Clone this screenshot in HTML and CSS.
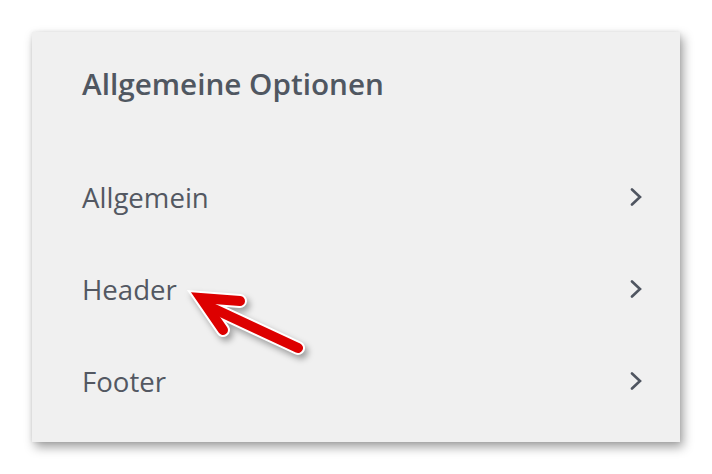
FILE: index.html
```html
<!DOCTYPE html>
<html lang="de">
<head>
<meta charset="utf-8">
<link rel="stylesheet" href="styles.css">
</head>
<body>
<div class="card">
  <h1 class="title">Allgemeine Optionen</h1>
  <ul class="list">
    <li class="row"><span class="label">Allgemein</span><svg class="chev" viewBox="0 0 12 18" width="12" height="18"><path d="M2 1.5 L10 9 L2 16.5" /></svg></li>
    <li class="row"><span class="label">Header</span><svg class="chev" viewBox="0 0 12 18" width="12" height="18"><path d="M2 1.5 L10 9 L2 16.5" /></svg></li>
    <li class="row"><span class="label">Footer</span><svg class="chev" viewBox="0 0 12 18" width="12" height="18"><path d="M2 1.5 L10 9 L2 16.5" /></svg></li>
  </ul>
  <svg class="arrow" viewBox="32 32 648 410" width="648" height="410">
    <g class="outline">
      <path d="M240 301 L201 298 L223 330" />
      <path d="M210 307 L298 348" />
    </g>
    <g class="fill">
      <path d="M240 301 L201 298 L223 330" />
      <path d="M210 307 L298 348" />
    </g>
  </svg>
</div>
</body>
</html>
```

FILE: styles.css
```css
html, body {
  margin: 0;
  padding: 0;
  background: #ffffff;
}
body {
  width: 712px;
  height: 474px;
  overflow: hidden;
  font-family: "Open Sans", "DejaVu Sans", sans-serif;
}
.card {
  position: relative;
  margin: 32px 0 0 32px;
  width: 648px;
  height: 410px;
  box-sizing: border-box;
  background: #f0f0f0;
  box-shadow: 3px 5px 10px rgba(0, 0, 0, 0.38), 0 0 4px rgba(0, 0, 0, 0.08);
  padding: 33px 38px 15px 50px;
  display: flex;
  flex-direction: column;
}
.title {
  margin: 0;
  font-size: 29.7px;
  line-height: 38px;
  font-weight: 600;
  color: #505761;
  height: 86px;
}
.list {
  list-style: none;
  margin: 0;
  padding: 0;
  display: flex;
  flex-direction: column;
}
.row {
  height: 92px;
  display: flex;
  align-items: center;
  justify-content: space-between;
}
.label {
  font-size: 27.6px;
  color: #535862;
}
.chev path {
  fill: none;
  stroke: #4f5560;
  stroke-width: 2.6;
  stroke-linecap: round;
  stroke-linejoin: miter;
}
.arrow {
  position: absolute;
  left: 0;
  top: 0;
  pointer-events: none;
  filter: drop-shadow(3px 4px 3px rgba(0, 0, 0, 0.35));
}
.arrow path {
  fill: none;
  stroke-linecap: round;
  stroke-linejoin: miter;
}
.outline path {
  stroke: #ffffff;
  stroke-width: 14;
}
.fill path {
  stroke: #dd0000;
  stroke-width: 10;
}
```
